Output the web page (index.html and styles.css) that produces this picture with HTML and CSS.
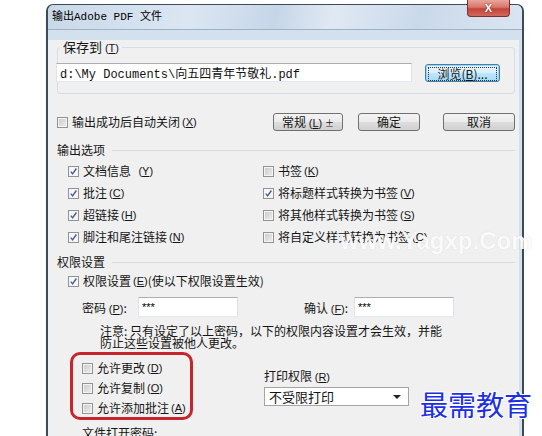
FILE: index.html
```html
<!DOCTYPE html>
<html lang="zh-CN">

<head>
    <meta charset="UTF-8">
    <meta name="viewport" content="width=device-width, initial-scale=1.0">
    <title>输出Adobe PDF 文件</title>
    <link rel="stylesheet" href="styles.css">
</head>

<body>
    <div class="window">
        <!-- 标题栏 -->
        <div class="titlebar">
            <span class="title">输出Adobe PDF 文件</span>
            <span class="close">X</span>
        </div>

        <div class="content">
            <!-- 保存位置 -->
            <fieldset class="group">
                <legend>保存到 <span class="key">(<u>T</u>)</span></legend>
                <div class="path-row">
                    <input class="path" type="text" value="d:\My Documents\向五四青年节敬礼.pdf">
                    <button class="btn browse"><span class="focus-ring">浏览(<u>B</u>)...</span></button>
                </div>
            </fieldset>

            <!-- 自动关闭 + 按钮 -->
            <div class="action-row">
                <label class="check grow"><span class="box"></span>输出成功后自动关闭 <span class="key">(<u>X</u>)</span></label>
                <button class="btn btn-general">常规 <span class="key">(<u>L</u>)</span> <span class="arrow">±</span></button>
                <button class="btn btn-ok">确定</button>
                <button class="btn btn-cancel">取消</button>
            </div>

            <!-- 输出选项 -->
            <div class="section-title">输出选项</div>
            <div class="options">
                <label class="check"><span class="box on"><svg viewBox="0 0 11 11"><path d="M2.2 5.6 L4.4 8.4 L9 1.8" /></svg></span>文档信息 &nbsp;<span class="key">(<u>Y</u>)</span></label>
                <label class="check"><span class="box"></span>书签 <span class="key">(<u>K</u>)</span></label>
                <label class="check"><span class="box on"><svg viewBox="0 0 11 11"><path d="M2.2 5.6 L4.4 8.4 L9 1.8" /></svg></span>批注 <span class="key">(<u>C</u>)</span></label>
                <label class="check"><span class="box on"><svg viewBox="0 0 11 11"><path d="M2.2 5.6 L4.4 8.4 L9 1.8" /></svg></span>将标题样式转换为书签 <span class="key">(<u>V</u>)</span></label>
                <label class="check"><span class="box on"><svg viewBox="0 0 11 11"><path d="M2.2 5.6 L4.4 8.4 L9 1.8" /></svg></span>超链接 <span class="key">(<u>H</u>)</span></label>
                <label class="check"><span class="box"></span>将其他样式转换为书签 <span class="key">(<u>S</u>)</span></label>
                <label class="check"><span class="box on"><svg viewBox="0 0 11 11"><path d="M2.2 5.6 L4.4 8.4 L9 1.8" /></svg></span>脚注和尾注链接 <span class="key">(<u>N</u>)</span></label>
                <label class="check"><span class="box"></span>将自定义样式转换为书签 <span class="key">(<u>C</u>)</span></label>
            </div>

            <!-- 权限设置 -->
            <div class="section-title perm-title">权限设置</div>
            <label class="check perm-check"><span class="box on"><svg viewBox="0 0 11 11"><path d="M2.2 5.6 L4.4 8.4 L9 1.8" /></svg></span>权限设置 <span class="key">(<u>E</u>)</span> (使以下权限设置生效)</label>

            <div class="pw-row">
                <span class="pw-label">密码 <span class="key">(<u>P</u>)</span>:</span>
                <input class="pw" type="text" value="***">
                <span class="pw-label confirm">确认 <span class="key">(<u>F</u>)</span>:</span>
                <input class="pw" type="text" value="***">
            </div>

            <p class="note">注意: 只有设定了以上密码，以下的权限内容设置才会生效，并能<br>防止这些设置被他人更改。</p>

            <div class="bottom">
                <div class="redbox">
                    <label class="check row20"><span class="box"></span>允许更改 <span class="key">(<u>D</u>)</span></label>
                    <label class="check row20"><span class="box"></span>允许复制 <span class="key">(<u>O</u>)</span></label>
                    <label class="check row20"><span class="box"></span>允许添加批注 <span class="key">(<u>A</u>)</span></label>
                </div>
                <div class="print">
                    <div class="print-label">打印权限 <span class="key">(<u>R</u>)</span></div>
                    <div class="select">不受限打印<span class="caret"></span></div>
                </div>
            </div>

            <div class="open-pw">文件打开密码:</div>
        </div>
    </div>

    <!-- 图片水印 -->
    <div class="wm-site">www.Yagxp.Com</div>
    <div class="wm-logo">最需教育</div>
</body>

</html>
```

FILE: styles.css
```css
html,
body {
    margin: 0;
    padding: 0;
}

body {
    background: #fff;
    font-family: "Noto Sans CJK SC", sans-serif;
    font-size: 12px;
    color: #151515;
    height: 436px;
    overflow: hidden;
}

/* 窗口外框 */
.window {
    margin: 4px 0 0 46px;
    width: 471px;
    height: 470px;
    padding-right: 3px;
    border: 1px solid #3c4b5a;
    border-left-width: 2px;
    border-right-width: 2px;
    border-bottom: 0;
    border-radius: 7px 7px 0 0;
    background: #d3e1ee;
}

.titlebar {
    height: 24px;
    margin-right: -3px;
    display: flex;
    align-items: center;
    border-bottom: 1px solid #9eb2c5;
    border-radius: 6px 6px 0 0;
    background: linear-gradient(100deg, #c9d8e8 0%, #dbe6f2 30%, #c6d6e8 48%, #e0e9f3 60%, #cad9ea 78%, #dae5f1 100%);
}

.title {
    flex: 1;
    padding-left: 4px;
    font-family: "Liberation Mono", "Noto Sans CJK SC", monospace;
    font-size: 11px;
    line-height: 14px;
    color: #000;
}

.close {
    align-self: flex-start;
    margin-top: -5px;
    margin-right: 12px;
    width: 43px;
    height: 17px;
    box-sizing: border-box;
    border: 1px solid #7b3129;
    border-top: 0;
    border-radius: 0 0 4px 4px;
    background: linear-gradient(#e9a69c 0%, #d9766a 45%, #c4443a 55%, #d0685c 100%);
    color: #fff;
    font: bold 11px/16px "Liberation Sans", sans-serif;
    text-align: center;
    text-shadow: 0 0 2px #6a1a12;
}

.content {
    height: 440px;
    padding: 0 4px 0 9px;
    background: #f0f0f0;
}

/* 快捷键 */
.key {
    font-family: "Liberation Sans", sans-serif;
    font-size: 11px;
}

/* 保存到 */
.group {
    margin: 10px 0 0;
    padding: 8px 14px 11px 0;
    border: 1px solid #d6dde4;
    border-radius: 3px;
    min-width: 0;
}

.group legend {
    margin-left: 2px;
    padding: 0 3px;
    font-size: 13px;
    line-height: 14px;
}

.path-row {
    display: flex;
    align-items: center;
}

.path {
    margin: 0 0 0 -2px;
    width: 356px;
    height: 19px;
    box-sizing: border-box;
    padding: 0 3px;
    border: 1px solid #abadb3;
    border-color: #abadb3 #dbdfe6 #e3e9ef #e2e3ea;
    background: #fff;
    font-family: "Liberation Mono", "Noto Sans CJK SC", monospace;
    font-size: 12px;
    color: #111;
    outline: none;
}

.btn {
    height: 18px;
    box-sizing: border-box;
    padding: 0;
    border: 1px solid #707070;
    border-radius: 3px;
    background: linear-gradient(#f3f3f3 0%, #ebebeb 48%, #dddddd 52%, #d0d0d0 100%);
    font-family: "Noto Sans CJK SC", sans-serif;
    font-size: 12px;
    line-height: 16px;
    color: #151515;
}

.browse {
    margin-left: 13px;
    width: 75px;
    height: 18px;
    padding: 2px;
    border-color: #3c7fb1;
    background: linear-gradient(#e8f5fc 0%, #d9f0fc 48%, #bee6fd 52%, #a7d9f5 100%);
    box-shadow: inset 0 0 0 1px #9fd4f0;
}

.focus-ring {
    display: block;
    height: 12px;
    line-height: 12px;
    border: 1px dotted #333;
}

/* 按钮行 */
.action-row {
    display: flex;
    align-items: center;
    margin-top: 19px;
    height: 18px;
}

.grow {
    flex: 1;
}

.btn-general {
    width: 70px;
}

.arrow {
    font-size: 9px;
}

.btn-ok {
    width: 62px;
    margin-left: 15px;
}

.btn-cancel {
    width: 72px;
    margin-left: 23px;
}

/* 复选框 */
.check {
    display: flex;
    align-items: center;
    white-space: nowrap;
    line-height: 16px;
}

.check .key {
    margin-left: 2px;
}

.box {
    flex: none;
    width: 11px;
    height: 11px;
    box-sizing: border-box;
    margin-right: 4px;
    border: 1px solid #939393;
    background: linear-gradient(135deg, #c9c9c9 0%, #dedede 55%, #eeeeee 100%);
    box-shadow: inset 0 0 0 1px #f4f4f4;
}

.box.on {
    background: #f7f7f7;
}

.box svg {
    display: block;
    width: 9px;
    height: 9px;
}

.box path {
    fill: none;
    stroke: #4a5c9a;
    stroke-width: 1.8;
}

/* 分组标题 */
.section-title {
    display: flex;
    align-items: center;
    margin-top: 11px;
    height: 16px;
    line-height: 16px;
}

.section-title::after {
    content: "";
    flex: 1;
    height: 1px;
    margin-left: 7px;
    background: #d6dde4;
}

.options {
    display: grid;
    grid-template-columns: 195px 1fr;
    grid-auto-rows: 22px;
    margin-top: 2px;
    padding-left: 11px;
}

.perm-title {
    margin-top: 6px;
}

.perm-check {
    height: 20px;
    margin-top: 1px;
    padding-left: 11px;
}

/* 密码 */
.pw-row {
    display: flex;
    align-items: center;
    margin-top: 6px;
    padding-left: 25px;
}

.pw-label {
    width: 56px;
}

.pw-label.confirm {
    width: 50px;
    margin-left: 66px;
}

.pw {
    margin: 0;
    width: 100px;
    height: 20px;
    box-sizing: border-box;
    padding: 0 3px;
    border: 1px solid #abadb3;
    border-color: #abadb3 #dbdfe6 #e3e9ef #e2e3ea;
    background: #fff;
    font-family: "Liberation Sans", sans-serif;
    font-size: 11px;
    outline: none;
}

.note {
    margin: 8px 0 0;
    padding-left: 43px;
    line-height: 12px;
}

/* 红框 + 打印权限 */
.bottom {
    display: flex;
    align-items: flex-start;
    margin-top: 3px;
}

.redbox {
    margin-left: 13px;
    width: 123px;
    height: 68px;
    box-sizing: border-box;
    padding: 3px 0 0 9px;
    border: 3px solid #c6252d;
    border-radius: 10px;
}

.row20 {
    height: 20px;
}

.print {
    margin: 16px 0 0 71px;
}

.print-label {
    line-height: 16px;
}

.select {
    position: relative;
    margin-top: 2px;
    width: 145px;
    height: 19px;
    box-sizing: border-box;
    padding-left: 4px;
    border: 1px solid #a5a5a5;
    background: #fff;
    line-height: 17px;
    font-size: 13px;
}

.caret {
    position: absolute;
    right: 7px;
    top: 7px;
    border-left: 4px solid transparent;
    border-right: 4px solid transparent;
    border-top: 4px solid #222;
}

.open-pw {
    margin-top: 5px;
    padding-left: 25px;
    line-height: 16px;
}

/* 水印 */
.wm-site {
    position: absolute;
    left: 340px;
    top: 226px;
    font: bold 24px/30px "Liberation Sans", sans-serif;
    color: rgba(255, 255, 255, 0.92);
    text-shadow: 0 0 1px rgba(120, 120, 120, 0.25);
}

.wm-logo {
    position: absolute;
    left: 420px;
    top: 390px;
    font-size: 28px;
    line-height: 28px;
    color: #1d2fe6;
    text-shadow: 1px 1px 0 #fff, -1px -1px 0 #fff, 1px -1px 0 #fff, -1px 1px 0 #fff;
}
```
